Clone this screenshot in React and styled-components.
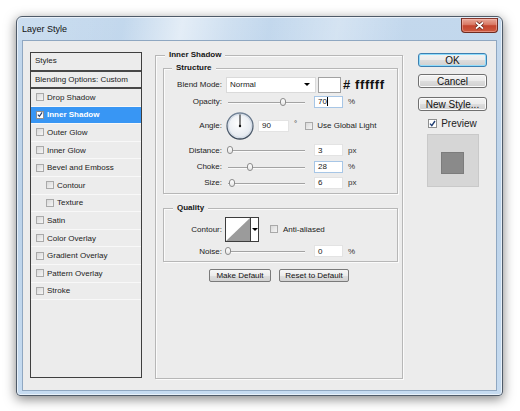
import React from "react";
import styled, { createGlobalStyle } from "styled-components";

const GlobalStyle = createGlobalStyle`
  * { box-sizing: border-box; }
  html, body { margin: 0; padding: 0; background: #ffffff; }
  body {
    width: 520px;
    height: 411px;
    overflow: hidden;
    font-family: "Liberation Sans", Arial, sans-serif;
    font-size: 8px;
    color: #1b1b1b;
  }
`;

const Window = styled.div`
  margin: 16px 0 0 16px;
  width: 487px;
  height: 380px;
  display: flex;
  flex-direction: column;
  padding: 0 5px 4px;
  border: 1px solid #4f5b69;
  border-radius: 6px 6px 4px 4px;
  background: linear-gradient(180deg, #c3d8ed 0%, #bcd3ea 50%, #c6dbf0 100%);
  box-shadow: 0 3px 12px rgba(0, 0, 0, 0.5), inset 0 0 0 1px rgba(255, 255, 255, 0.6);
`;

const TitleBar = styled.div`
  height: 23px;
  margin: 0 -5px;
  padding: 0 4px 0 5px;
  display: flex;
  align-items: center;
  border-radius: 5px 5px 0 0;
  background: linear-gradient(
    100deg,
    rgba(255, 255, 255, 0.15) 0%,
    rgba(255, 255, 255, 0) 22%,
    rgba(255, 255, 255, 0.55) 34%,
    rgba(255, 255, 255, 0.2) 44%,
    rgba(255, 255, 255, 0) 52%,
    rgba(255, 255, 255, 0.3) 66%,
    rgba(255, 255, 255, 0) 80%
  );
`;

const Title = styled.span`
  font-size: 9px;
  color: #111;
`;

const CloseButton = styled.div`
  margin-left: auto;
  align-self: flex-start;
  margin-top: 1px;
  width: 37px;
  height: 15px;
  display: flex;
  align-items: center;
  justify-content: center;
  border: 1px solid #6e2b21;
  border-top-color: #8a3a2e;
  border-radius: 0 0 4px 4px;
  background: linear-gradient(180deg, #e8a798 0%, #d97a66 42%, #c4452f 52%, #cd5a40 100%);
  box-shadow: inset 0 0 0 1px rgba(255, 200, 190, 0.45);
`;

const Client = styled.div`
  flex: 1;
  display: flex;
  align-items: flex-start;
  padding: 11px 0 0 7px;
  border: 1px solid #8fa7c1;
  background: #ececec;
`;

/* ---------- styles list ---------- */

const StylesPanel = styled.div`
  width: 112px;
  height: 326px;
  flex-shrink: 0;
  display: flex;
  flex-direction: column;
  border: 1px solid #3f3f3f;
`;

const PanelHeader = styled.div`
  height: ${p => p.$h}px;
  display: flex;
  align-items: center;
  padding: 0 0 ${p => p.$pb || 0}px 4px;
  border-bottom: 2px solid #474747;
  color: #222;
`;

const ListItem = styled.div`
  height: 17.6px;
  display: flex;
  align-items: center;
  gap: 3px;
  padding-left: ${p => (p.$indent ? 15 : 5)}px;
  border-bottom: 1px solid #f8f8f8;
  background: ${p => (p.$selected ? "#3896f4" : "transparent")};
  color: ${p => (p.$selected ? "#ffffff" : "#222")};
  font-weight: ${p => (p.$selected ? "bold" : "normal")};
`;

const Box = styled.span`
  width: ${p => p.$size || 8}px;
  height: ${p => p.$size || 8}px;
  flex-shrink: 0;
  display: flex;
  align-items: center;
  justify-content: center;
  border: 1px solid ${p => (p.$checked ? "#8e8f8f" : "#a9a9a9")};
  background: ${p =>
    p.$checked ? "#ffffff" : "linear-gradient(135deg, #d9d9d9 0%, #f5f5f5 100%)"};
  margin-left: ${p => p.$ml || 0}px;
`;

const Checkbox = ({ checked, size, ml }) => (
  <Box $checked={checked} $size={size} $ml={ml}>
    {checked && (
      <svg width="7" height="7" viewBox="0 0 7 7">
        <path d="M1 3.6 L2.8 5.6 L6 1" fill="none" stroke="#1f3d73" strokeWidth="1.4" />
      </svg>
    )}
  </Box>
);

/* ---------- group boxes ---------- */

const Group = styled.div`
  display: flex;
  flex-direction: column;
  border: 1px solid #b7b7b7;
  box-shadow: 1px 1px 0 #fbfbfb, inset 1px 1px 0 #fbfbfb;
`;

const OuterGroup = styled(Group)`
  width: 248px;
  height: 324px;
  margin: 3px 0 0 13px;
  padding: 0 4px 0 7px;
  flex-shrink: 0;
`;

const InnerGroup = styled(Group)`
  margin-top: ${p => p.$mt}px;
  padding-bottom: ${p => p.$pb || 0}px;
`;

const Legend = styled.div`
  align-self: flex-start;
  height: 10px;
  line-height: 10px;
  margin: -6px 0 0 ${p => p.$ml}px;
  padding: 0 4px;
  background: #ececec;
  font-weight: bold;
  color: #151515;
`;

const Rows = styled.div`
  margin-top: 3px;
  display: flex;
  flex-direction: column;
`;

const Row = styled.div`
  height: ${p => p.$h}px;
  display: flex;
  align-items: center;
`;

const Label = styled.span`
  width: 58px;
  flex-shrink: 0;
  text-align: right;
  color: #222;
`;

const Dropdown = styled.div`
  margin-left: 4px;
  width: 90px;
  height: 16px;
  display: flex;
  align-items: center;
  padding: 0 5px 0 3px;
  background: #fff;
  border: 1px solid #dadada;
  color: #222;
`;

const Arrow = styled.span`
  margin-left: ${p => (p.$center ? "0" : "auto")};
  width: 0;
  height: 0;
  border-left: 3px solid transparent;
  border-right: 3px solid transparent;
  border-top: 3px solid #000;
`;

const Swatch = styled.div`
  margin-left: 2px;
  width: 23px;
  height: 16px;
  background: #fff;
  border: 1px solid #a2a2a2;
`;

const Hex = styled.span`
  margin-left: 2px;
  font-size: 13px;
  font-weight: bold;
  letter-spacing: 0.6px;
  color: #111;
  white-space: nowrap;
`;

const Track = styled.div`
  position: relative;
  margin-left: 6px;
  width: 77px;
  height: 10px;
  flex-shrink: 0;
  &::before {
    content: "";
    position: absolute;
    left: 0;
    right: 0;
    top: 5px;
    height: 1px;
    background: #a3a3a3;
    box-shadow: 0 1px 0 #fafafa;
  }
`;

const Thumb = styled.span`
  position: absolute;
  top: 1px;
  left: calc(${p => p.$pos}% - 3px);
  width: 6px;
  height: 8px;
  border: 1px solid #8b8b8b;
  border-radius: 3px;
  background: linear-gradient(180deg, #ffffff 0%, #e6e6e6 100%);
`;

const Field = styled.div`
  margin-left: ${p => p.$ml}px;
  width: ${p => p.$w || 29}px;
  height: 12px;
  flex-shrink: 0;
  display: flex;
  align-items: center;
  padding-left: 3px;
  background: #fff;
  border: 1px solid ${p => (p.$focused ? "#a7c6e6" : "#e3e3e3")};
  color: #222;
`;

const Caret = styled.span`
  width: 1px;
  height: 9px;
  background: #000;
`;

const Unit = styled.span`
  margin-left: ${p => p.$ml || 5}px;
  color: #333;
  margin-bottom: ${p => p.$raise || 0}px;
`;

const Text = styled.span`
  margin-left: ${p => p.$ml}px;
  color: #222;
`;

const Dial = styled.svg`
  margin-left: 4px;
  flex-shrink: 0;
`;

const ContourPicker = styled.div`
  margin-left: 3px;
  width: 34px;
  height: 25px;
  display: flex;
  border: 1px solid #3d3d3d;
  background: #fff;
`;

const ContourArrow = styled.div`
  flex: 1;
  display: flex;
  align-items: center;
  justify-content: center;
  border-left: 1px solid #3d3d3d;
`;

const SmallButtons = styled.div`
  margin-top: 7px;
  display: flex;
  justify-content: center;
  gap: 8px;
  padding-right: 3px;
`;

const SmallButton = styled.div`
  width: ${p => p.$w}px;
  height: 13px;
  display: flex;
  align-items: center;
  justify-content: center;
  border: 1px solid #7a7a7a;
  border-radius: 2px;
  background: linear-gradient(180deg, #f6f6f6 0%, #ececec 50%, #dedede 51%, #d3d3d3 100%);
  color: #111;
  white-space: nowrap;
`;

/* ---------- right column ---------- */

const Side = styled.div`
  margin: 1px 0 0 15px;
  width: 69px;
  display: flex;
  flex-direction: column;
  align-items: center;
`;

const DialogButton = styled.div`
  margin-top: ${p => p.$mt || 0}px;
  width: 69px;
  height: 14px;
  display: flex;
  align-items: center;
  justify-content: center;
  font-size: 10px;
  color: #111;
  border: 1px solid ${p => (p.$default ? "#3c7fb1" : "#707070")};
  border-radius: 3px;
  background: linear-gradient(180deg, #f3f3f3 0%, #ebebeb 50%, #dddddd 51%, #d0d0d0 100%);
  box-shadow: ${p => (p.$default ? "inset 0 0 0 1px #8fdcfb" : "inset 0 0 0 1px #fbfbfb")};
`;

const PreviewRow = styled.div`
  margin-top: 6px;
  height: 12px;
  display: flex;
  align-items: center;
  font-size: 10px;
  color: #111;
`;

const PreviewBox = styled.div`
  margin-top: 5px;
  width: 52px;
  height: 53px;
  display: flex;
  align-items: center;
  justify-content: center;
  padding-top: 4px;
  background: #d6d6d6;
  border: 1px solid #c9c9c9;
`;

const PreviewSquare = styled.div`
  width: 23px;
  height: 22px;
  background: #8a8a8a;
  border: 1px solid #7c7c7c;
`;

const effects = [
  { label: "Drop Shadow" },
  { label: "Inner Shadow", checked: true, selected: true },
  { label: "Outer Glow" },
  { label: "Inner Glow" },
  { label: "Bevel and Emboss" },
  { label: "Contour", indent: true },
  { label: "Texture", indent: true },
  { label: "Satin" },
  { label: "Color Overlay" },
  { label: "Gradient Overlay" },
  { label: "Pattern Overlay" },
  { label: "Stroke" },
];

const SliderRow = ({ h, label, pos, value, unit, focused, caret }) => (
  <Row $h={h}>
    <Label>{label}</Label>
    <Track>
      <Thumb $pos={pos} />
    </Track>
    <Field $ml={9} $focused={focused}>
      {value}
      {caret && <Caret />}
    </Field>
    <Unit>{unit}</Unit>
  </Row>
);

export default function App() {
  return (
    <>
      <GlobalStyle />
      <Window>
        <TitleBar>
          <Title>Layer Style</Title>
          <CloseButton>
            <svg width="11" height="9" viewBox="0 0 11 9">
              <path d="M2 1.5 L9 7.5 M9 1.5 L2 7.5" stroke="#5b1c13" strokeWidth="3.2" />
              <path d="M2 1.5 L9 7.5 M9 1.5 L2 7.5" stroke="#ffffff" strokeWidth="1.7" />
            </svg>
          </CloseButton>
        </TitleBar>

        <Client>
          <StylesPanel>
            <PanelHeader $h={19} $pb={2}>Styles</PanelHeader>
            <PanelHeader $h={17}>Blending Options: Custom</PanelHeader>
            {effects.map(e => (
              <ListItem key={e.label} $indent={e.indent} $selected={e.selected}>
                <Checkbox checked={e.checked} />
                {e.label}
              </ListItem>
            ))}
          </StylesPanel>

          <OuterGroup>
            <Legend $ml={2}>Inner Shadow</Legend>

            <InnerGroup $mt={8} $pb={2}>
              <Legend $ml={8}>Structure</Legend>
              <Rows>
                <Row $h={17}>
                  <Label>Blend Mode:</Label>
                  <Dropdown>
                    Normal
                    <Arrow />
                  </Dropdown>
                  <Swatch />
                  <Hex># ffffff</Hex>
                </Row>
                <SliderRow h={17} label="Opacity:" pos={72} value="70" unit="%" focused caret />
                <Row $h={31}>
                  <Label>Angle:</Label>
                  <Dial width="28" height="28" viewBox="0 0 28 28">
                    <defs>
                      <radialGradient id="dialFill" cx="45%" cy="40%" r="60%">
                        <stop offset="0" stopColor="#ffffff" />
                        <stop offset="1" stopColor="#e2e7ee" />
                      </radialGradient>
                      <linearGradient id="dialRing" x1="0" y1="0" x2="0" y2="1">
                        <stop offset="0" stopColor="#75869a" />
                        <stop offset="1" stopColor="#3e4b5b" />
                      </linearGradient>
                    </defs>
                    <circle cx="14" cy="14" r="13" fill="url(#dialFill)" stroke="url(#dialRing)" strokeWidth="1.3" />
                    <circle cx="14" cy="14" r="11.6" fill="none" stroke="#c9d3df" strokeWidth="0.8" />
                    <line x1="14" y1="14" x2="14" y2="2.5" stroke="#111" strokeWidth="1" />
                    <circle cx="14" cy="14" r="1.2" fill="#111" />
                  </Dial>
                  <Field $ml={4} $w={31}>90</Field>
                  <Unit $ml={5} $raise={5}>°</Unit>
                  <Checkbox ml={8} />
                  <Text $ml={4}>Use Global Light</Text>
                </Row>
                <SliderRow h={18} label="Distance:" pos={3} value="3" unit="px" />
                <SliderRow h={15} label="Choke:" pos={28} value="28" unit="%" focused />
                <SliderRow h={17} label="Size:" pos={5.5} value="6" unit="px" />
              </Rows>
            </InnerGroup>

            <InnerGroup $mt={14} $pb={1}>
              <Legend $ml={9}>Quality</Legend>
              <Rows>
                <Row $h={26}>
                  <Label>Contour:</Label>
                  <ContourPicker>
                    <svg width="24" height="23" viewBox="0 0 24 23">
                      <rect x="0" y="0" width="24" height="23" fill="#ffffff" />
                      <polygon points="0,23 24,0 24,23" fill="#9b9b9b" />
                    </svg>
                    <ContourArrow>
                      <Arrow $center />
                    </ContourArrow>
                  </ContourPicker>
                  <Checkbox ml={11} />
                  <Text $ml={5}>Anti-aliased</Text>
                </Row>
                <SliderRow h={18} label="Noise:" pos={0} value="0" unit="%" />
              </Rows>
            </InnerGroup>

            <SmallButtons>
              <SmallButton $w={62}>Make Default</SmallButton>
              <SmallButton $w={70}>Reset to Default</SmallButton>
            </SmallButtons>
          </OuterGroup>

          <Side>
            <DialogButton $default>OK</DialogButton>
            <DialogButton $mt={7}>Cancel</DialogButton>
            <DialogButton $mt={9}>New Style...</DialogButton>
            <PreviewRow>
              <Checkbox checked size={9} />
              <Text $ml={4}>Preview</Text>
            </PreviewRow>
            <PreviewBox>
              <PreviewSquare />
            </PreviewBox>
          </Side>
        </Client>
      </Window>
    </>
  );
}
